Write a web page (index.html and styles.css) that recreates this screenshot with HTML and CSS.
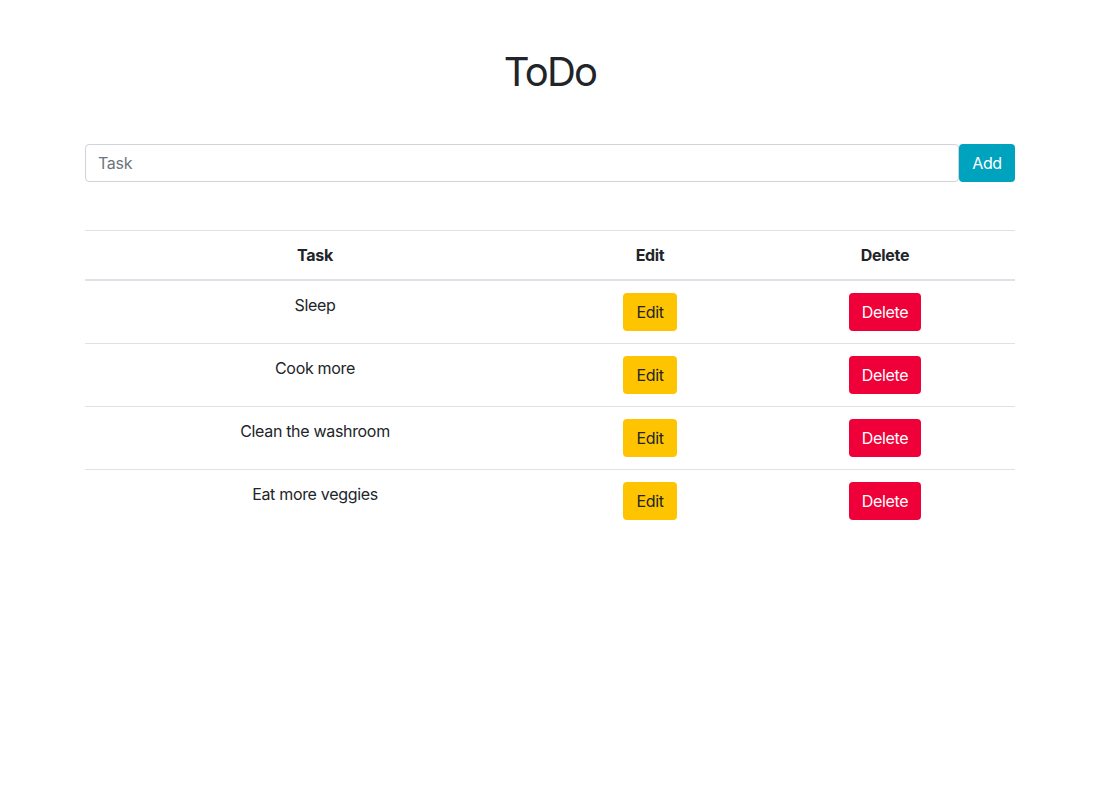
FILE: index.html
```html
<!DOCTYPE html>
<html lang="en">
<head>
<meta charset="utf-8">
<title>ToDo</title>
<link rel="stylesheet" href="styles.css">
</head>
<body>
<div class="container">
  <h1 class="title">ToDo</h1>
  <form class="add-form">
    <input class="task-input" type="text" placeholder="Task">
    <button class="btn btn-add" type="button">Add</button>
  </form>
  <table class="todo-table">
    <thead>
      <tr>
        <th class="col-task">Task</th>
        <th class="col-edit">Edit</th>
        <th class="col-delete">Delete</th>
      </tr>
    </thead>
    <tbody>
      <tr>
        <td>Sleep</td>
        <td><button class="btn btn-edit" type="button">Edit</button></td>
        <td><button class="btn btn-delete" type="button">Delete</button></td>
      </tr>
      <tr>
        <td>Cook more</td>
        <td><button class="btn btn-edit" type="button">Edit</button></td>
        <td><button class="btn btn-delete" type="button">Delete</button></td>
      </tr>
      <tr>
        <td>Clean the washroom</td>
        <td><button class="btn btn-edit" type="button">Edit</button></td>
        <td><button class="btn btn-delete" type="button">Delete</button></td>
      </tr>
      <tr>
        <td>Eat more veggies</td>
        <td><button class="btn btn-edit" type="button">Edit</button></td>
        <td><button class="btn btn-delete" type="button">Delete</button></td>
      </tr>
    </tbody>
  </table>
</div>
</body>
</html>
```

FILE: styles.css
```css
* { box-sizing: border-box; }
html, body { margin: 0; padding: 0; background: #fff; }
body {
  font-family: Inter, "Noto Sans", "Liberation Sans", sans-serif;
  font-size: 16px;
  line-height: 1.5;
  color: #212529;
  letter-spacing: -0.02em;
}
.container {
  width: 932px;
  margin: 0 auto;
  padding: 48px 2px 0 0;
}
.title {
  margin: 0;
  font-size: 40px;
  font-weight: 400;
  line-height: 48px;
  text-align: center;
  letter-spacing: -0.045em;
}
.add-form {
  display: flex;
  margin-top: 48px;
}
.task-input {
  flex: 1;
  height: 38px;
  padding: 6px 12px;
  font: inherit;
  letter-spacing: inherit;
  color: #495057;
  border: 1px solid #ced4da;
  border-radius: 4px;
  outline: none;
}
.task-input::placeholder { color: #6c757d; }
.btn {
  font: inherit;
  letter-spacing: inherit;
  height: 38px;
  padding: 6px 12px;
  border: 1px solid transparent;
  border-radius: 4px;
  cursor: pointer;
  line-height: 24px;
}
.btn-add { background: #00a3be; color: #fff; width: 56px; }
.btn-edit { background: #ffc400; color: #212529; }
.btn-delete { background: #ef0038; color: #fff; }
.todo-table {
  width: 100%;
  margin-top: 48px;
  border-collapse: collapse;
  text-align: center;
}
.todo-table th, .todo-table td {
  padding: 12px;
  border-top: 1px solid #dee2e6;
  vertical-align: top;
}
.todo-table th {
  font-weight: 700;
  border-bottom: 2px solid #dee2e6;
}
.col-task { width: 460px; }
.col-edit { width: 210px; }
.col-delete { width: 260px; }
```
